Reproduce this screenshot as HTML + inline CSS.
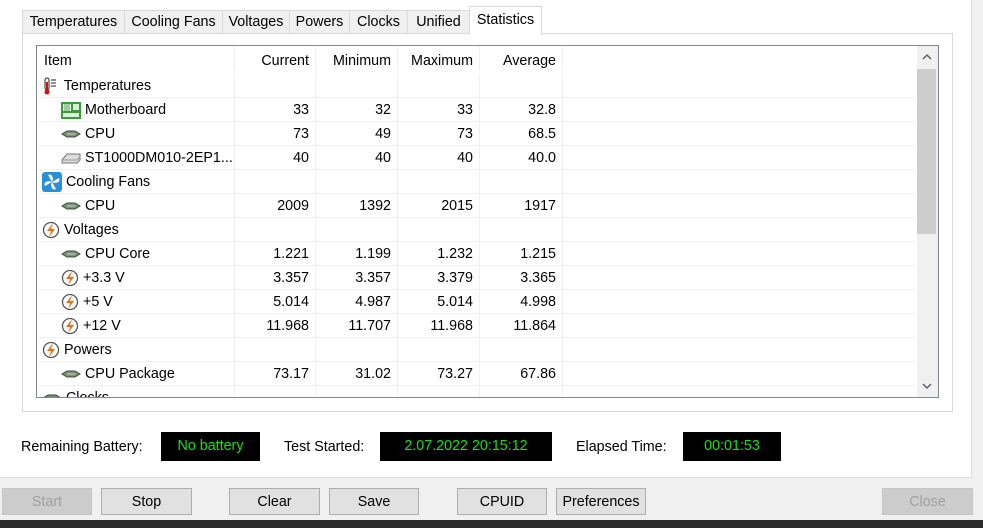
<!DOCTYPE html>
<html><head><meta charset="utf-8"><style>
*{margin:0;padding:0;box-sizing:border-box}
body{width:983px;height:528px;background:#f0f0f0;font-family:"Liberation Sans",sans-serif;font-size:14.3px;color:#000;position:relative;overflow:hidden}
.a{position:absolute}
.win{left:0;top:0;width:972px;height:478px;background:#fff;border-right:1px solid #dcdcdc;border-bottom:1px solid #dcdcdc}
.tab{top:10px;height:24px;background:#f0f0f0;border:1px solid #d9d9d9;border-bottom:none;line-height:23px;text-align:center;white-space:nowrap}
.panel{left:22px;top:33px;width:931px;height:379px;border:1px solid #d9d9d9;background:#fff}
.box{left:36px;top:45px;width:903px;height:353px;border:1px solid #828790;overflow:hidden;background:#fff}
.row{left:0;width:879px;height:24px;border-bottom:1px solid #f0f0f0}
.c{position:absolute;top:0;height:24px;line-height:25px;border-right:1px solid #f0f0f0}
.n{text-align:right;padding-right:6px}
.lbl{top:437px;line-height:20px}
.dbox{top:432px;height:29px;background:#000;color:#16e016;text-align:center;line-height:29px}
.btn{top:488px;height:27px;border:1px solid #adadad;background:#e1e1e1;text-align:center;line-height:26px}
.dis{color:#a0a0a0;border-color:#c5c5c5;background:#cccccc}
</style></head><body>
<div class="a win"></div>
<div class="a tab" style="left:22px;width:103px">Temperatures</div>
<div class="a tab" style="left:124px;width:99px">Cooling Fans</div>
<div class="a tab" style="left:222px;width:68px">Voltages</div>
<div class="a tab" style="left:289px;width:61px">Powers</div>
<div class="a tab" style="left:349px;width:59px">Clocks</div>
<div class="a tab" style="left:407px;width:63px">Unified</div>
<div class="a panel"></div>
<div class="a tab" style="left:469px;top:6px;height:29px;width:73px;background:#fff;line-height:26px;z-index:2">Statistics</div>
<div class="a box">
 <div class="a" style="left:0;top:0;width:880px;height:28px">
  <div class="c" style="left:0;width:198px;padding-left:7px;line-height:30px;border-color:#eee">Item</div>
  <div class="c n" style="left:197px;width:82px;line-height:30px">Current</div>
  <div class="c n" style="left:279px;width:82px;line-height:30px">Minimum</div>
  <div class="c n" style="left:361px;width:82px;line-height:30px">Maximum</div>
  <div class="c n" style="left:443px;width:83px;line-height:30px">Average</div>
 </div>
 <div id="rows"></div>
 <div class="a" style="left:880px;top:0;width:21px;height:351px;background:#f0f0f0">
  <div class="a" style="left:0;top:23px;width:19px;height:165px;background:#cdcdcd"></div>
  <svg class="a" style="left:5px;top:7px" width="10" height="8"><path d="M1 6 L5 2 L9 6" stroke="#606060" stroke-width="1.5" fill="none"/></svg>
  <svg class="a" style="left:5px;top:336px" width="10" height="8"><path d="M1 2 L5 6 L9 2" stroke="#606060" stroke-width="1.5" fill="none"/></svg>
 </div>
</div>
<div class="a lbl" style="left:21px">Remaining Battery:</div>
<div class="a dbox" style="left:161px;width:99px">No battery</div>
<div class="a lbl" style="left:284px">Test Started:</div>
<div class="a dbox" style="left:380px;width:172px">2.07.2022 20:15:12</div>
<div class="a lbl" style="left:576px">Elapsed Time:</div>
<div class="a dbox" style="left:683px;width:98px">00:01:53</div>
<div class="a btn dis" style="left:2px;width:90px">Start</div>
<div class="a btn" style="left:101px;width:91px">Stop</div>
<div class="a btn" style="left:229px;width:91px">Clear</div>
<div class="a btn" style="left:329px;width:90px">Save</div>
<div class="a btn" style="left:457px;width:90px">CPUID</div>
<div class="a btn" style="left:556px;width:90px">Preferences</div>
<div class="a btn dis" style="left:882px;width:91px">Close</div>
<div class="a" style="left:0;top:520px;width:983px;height:8px;background:#2b2b2b"></div>
<script>
const chip='<svg width="20" height="10" style="vertical-align:middle"><path d="M1 5 L6 2 H14 L19 5 L14 8 H6 Z" fill="#7a8f7a" stroke="#3e4e3e"/><path d="M6 5 H14" stroke="#c9d6c9"/></svg>';
const volt='<svg width="18" height="18" style="vertical-align:middle"><circle cx="9" cy="9" r="7.5" fill="#fff" stroke="#555" stroke-width="1.3"/><path d="M11 2 L5 10 H9 L7 16 L13 8 H9 Z" fill="#e8731a"/></svg>';
const therm='<svg width="18" height="18" style="vertical-align:middle"><rect x="3" y="1" width="4" height="12" rx="2" fill="#fff" stroke="#222"/><rect x="4" y="5" width="2" height="9" fill="#d01010"/><circle cx="5" cy="15" r="2.5" fill="#d01010"/><path d="M9 3h5M9 6h5M9 9h5" stroke="#222"/></svg>';
const mb='<svg width="20" height="17" style="vertical-align:middle"><rect x="0" y="0" width="20" height="17" fill="#3c9a3c"/><rect x="2" y="2" width="8" height="7" fill="#fff"/><path d="M4 2v7M6 2v7M8 2v7" stroke="#3c9a3c"/><rect x="12" y="2" width="6" height="6" fill="#d8f0d8"/><rect x="2" y="11" width="16" height="4" fill="#d8f0d8"/></svg>';
const hdd='<svg width="20" height="12" style="vertical-align:middle"><path d="M1 8 L6 2 H19 V8 L16 11 H1 Z" fill="#ddd" stroke="#777"/><path d="M1 8 H16 L19 5" stroke="#999" fill="none"/></svg>';
const fan='<svg width="20" height="20" style="vertical-align:middle"><rect width="20" height="20" rx="3" fill="#2a8fd6"/><path d="M10 10 L6 3 Q10 1 11 7Z M10 10 L17 6 Q19 10 13 11Z M10 10 L14 17 Q10 19 9 13Z M10 10 L3 14 Q1 10 7 9Z" fill="#fff"/></svg>';
const R=[[therm,'Temperatures',0],[mb,'Motherboard',1,'33','32','33','32.8'],[chip,'CPU',1,'73','49','73','68.5'],[hdd,'ST1000DM010-2EP1...',1,'40','40','40','40.0'],
[fan,'Cooling Fans',0],[chip,'CPU',1,'2009','1392','2015','1917'],[volt,'Voltages',0],[chip,'CPU Core',1,'1.221','1.199','1.232','1.215'],
[volt,'+3.3 V',1,'3.357','3.357','3.379','3.365'],[volt,'+5 V',1,'5.014','4.987','5.014','4.998'],[volt,'+12 V',1,'11.968','11.707','11.968','11.864'],
[volt,'Powers',0],[chip,'CPU Package',1,'73.17','31.02','73.27','67.86'],[chip,'Clocks',0]];
let h='';R.forEach((r,i)=>{const t=28+24*i;
h+=`<div class="a row" style="top:${t}px"><div class="c" style="left:0;width:198px;padding-left:${r[2]?24:5}px;white-space:nowrap;overflow:hidden">${r[0]} ${r[1]}</div>`;
[197,279,361,443].forEach((x,j)=>{h+=`<div class="c n" style="left:${x}px;width:${j==3?83:82}px">${r[3+j]||''}</div>`});h+='</div>'});
document.getElementById('rows').innerHTML=h;
</script>
</body></html>
